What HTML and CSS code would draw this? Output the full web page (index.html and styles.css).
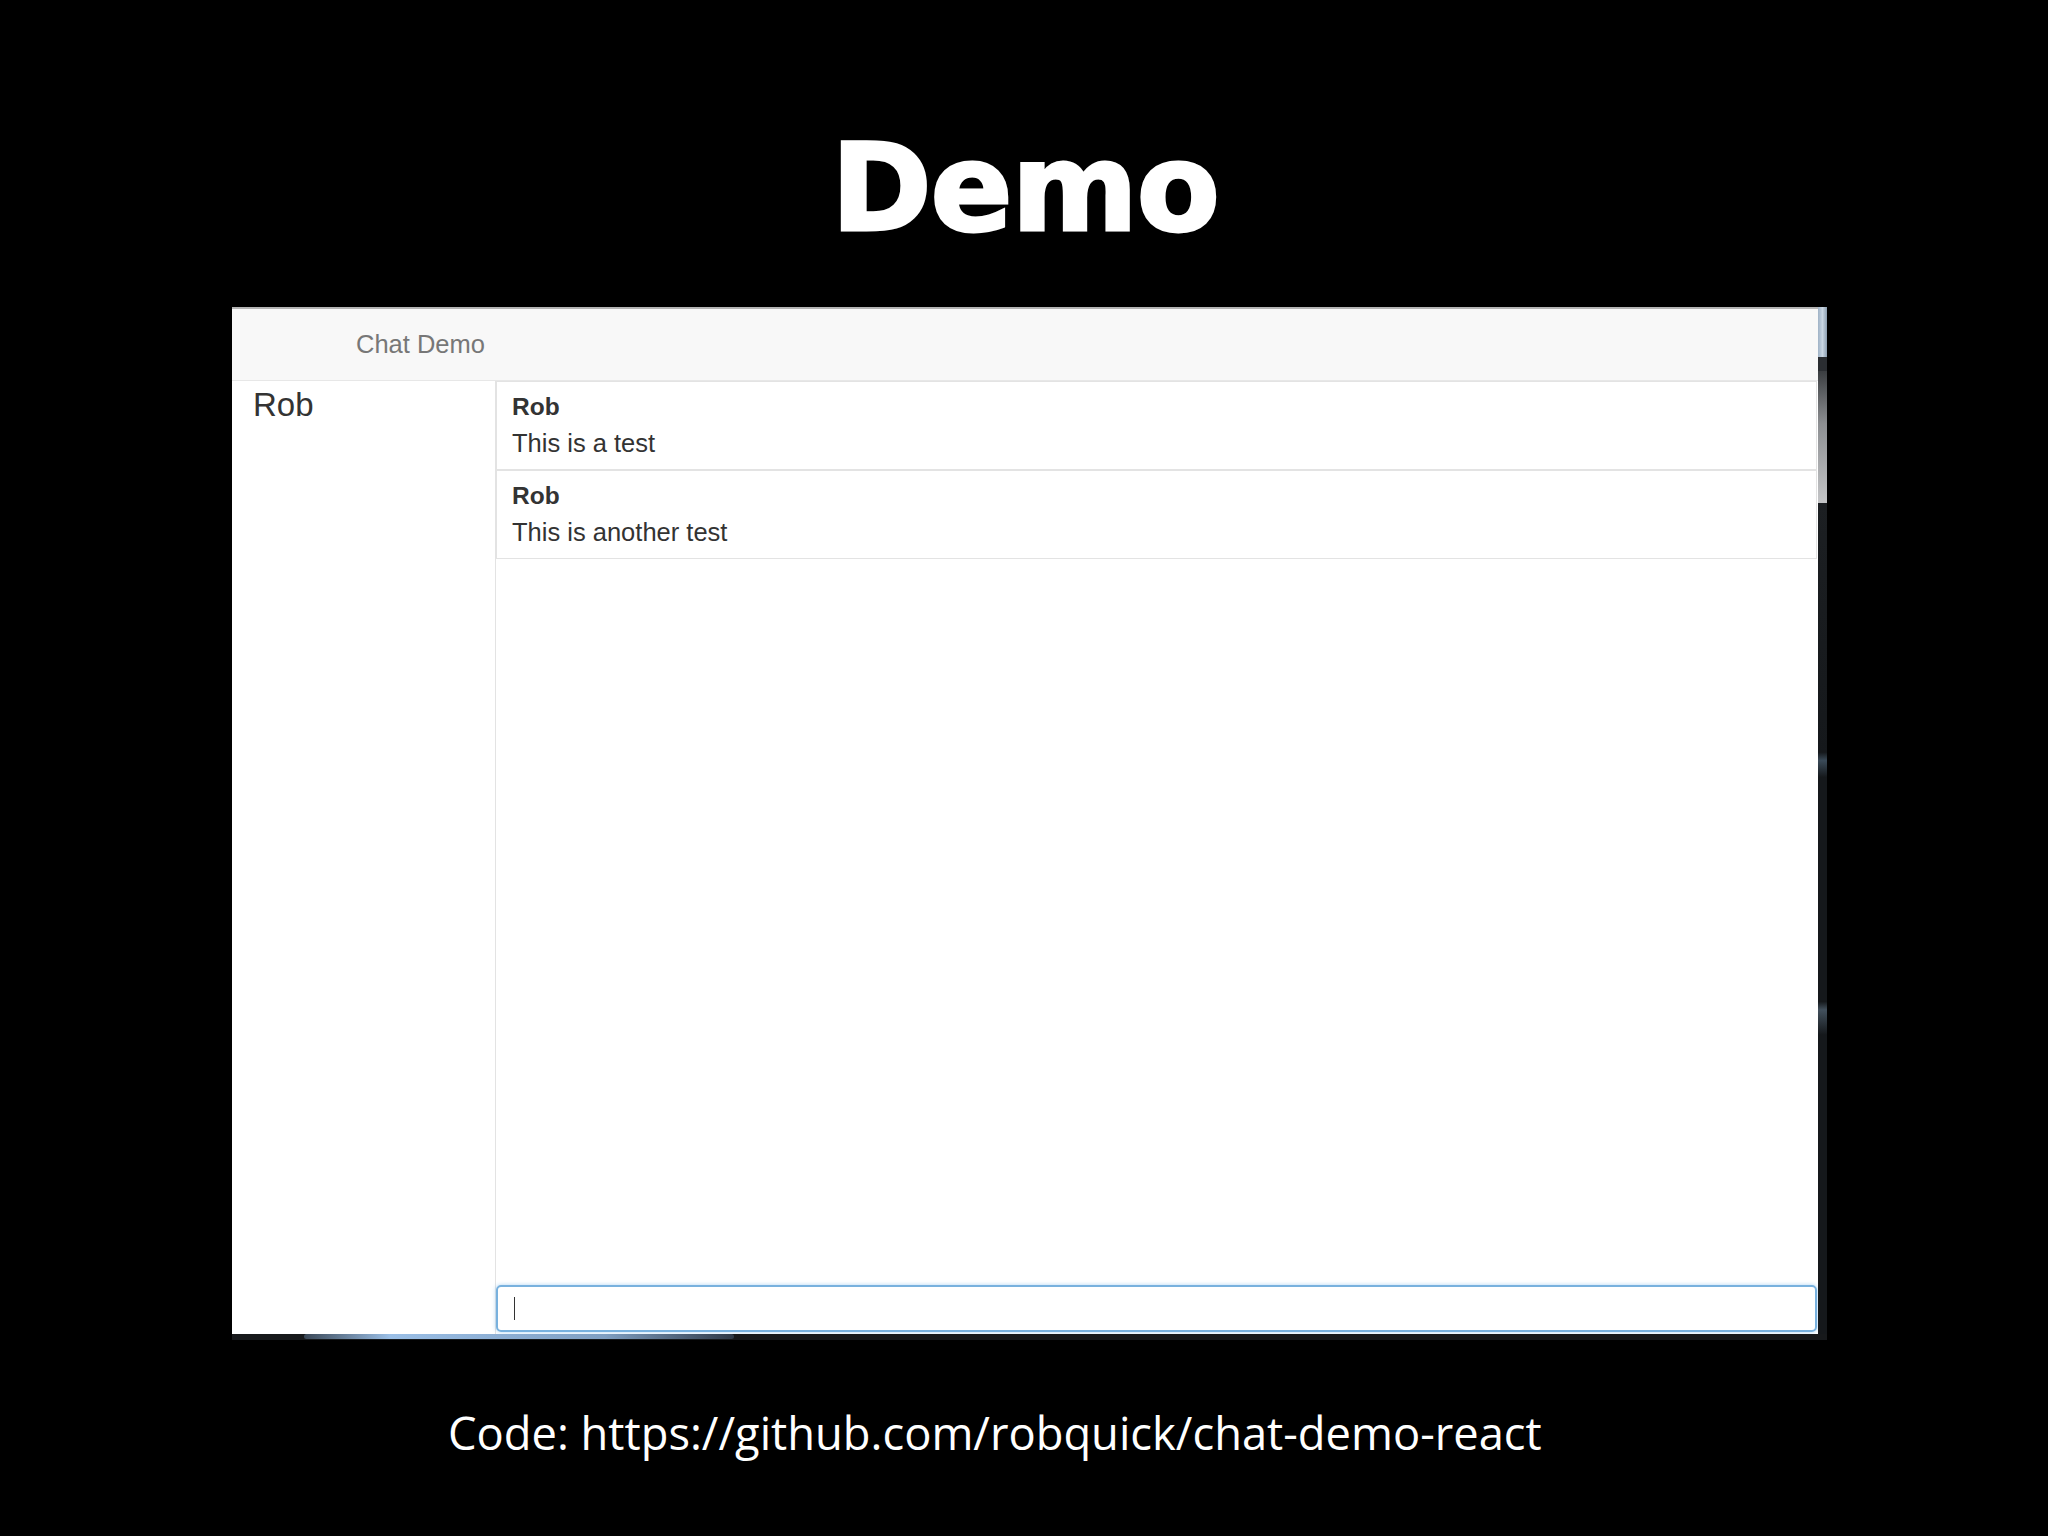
FILE: index.html
```html
<!doctype html>
<html lang="en">
  <head>
    <meta charset="UTF-8" />
    <meta name="viewport" content="width=device-width, initial-scale=1.0" />
    <title>Demo</title>
    <link rel="stylesheet" href="styles.css">
  </head>
  <body>
    <div class="slide">
      <h1 class="slide-title">Demo</h1>

      <div class="window">
        <div class="window-row">
          <div class="app">
            <div class="navbar">Chat Demo</div>
            <div class="app-body">
              <div class="users">
                <div class="user">Rob</div>
              </div>
              <div class="chat">
                <div class="messages">
                  <div class="message">
                    <div class="message-author">Rob</div>
                    <div class="message-text">This is a test</div>
                  </div>
                  <div class="message">
                    <div class="message-author">Rob</div>
                    <div class="message-text">This is another test</div>
                  </div>
                </div>
                <div class="chat-input"><span class="caret"></span></div>
              </div>
            </div>
          </div>
          <div class="scrollbar">
            <div class="scroll-cap"></div>
            <div class="scroll-gap"></div>
            <div class="scroll-thumb"></div>
            <div class="scroll-track"></div>
          </div>
        </div>
        <div class="window-edge"><span class="taskbar-glow"></span></div>
      </div>

      <p class="slide-footer">Code: https://github.com/robquick/chat-demo-react</p>
    </div>
  </body>
</html>
```

FILE: styles.css
```css
:root {
  --slide-bg: #000000;
  --text: #333333;
  --muted: #777777;
  --line: #e3e3e3;
  --focus: #78b1de;
}
body {
  margin: 0;
  padding: 0;
  width: 2048px;
  height: 1536px;
  overflow: hidden;
  background-color: var(--slide-bg);
  font-family: "Liberation Sans", Arial, sans-serif;
}

.slide {
  display: flex;
  flex-direction: column;
}
.slide-title {
  margin: 0;
  padding-top: 130px;
  text-align: center;
  color: white;
  font-family: "DejaVu Sans", sans-serif;
  font-size: 121px;
  line-height: 117px;
  font-weight: bold;
  letter-spacing: -1px;
  padding-left: 2px;
  -webkit-text-stroke: 3px white;
}

/* the screenshot of the chat app */
.window {
  margin-top: 60px;
  margin-left: 232px;
  width: 1595px;
  display: flex;
  flex-direction: column;
}
.window-row {
  display: flex;
  height: 1027px;
}
.app {
  width: 1586px;
  display: flex;
  flex-direction: column;
  background-color: white;
  border-top: 2px solid #b4b4b4;
}
.navbar {
  height: 71px;
  line-height: 71px;
  padding-left: 124px;
  background-color: #f8f8f8;
  border-bottom: 1px solid #e7e7e7;
  color: var(--muted);
  font-size: 25.5px;
}
.app-body {
  flex: 1;
  display: flex;
}
.users {
  width: 264px;
  box-sizing: border-box;
  border-right: 1px solid var(--line);
  padding: 6px 0 0 21px;
}
.user {
  font-size: 33px;
  line-height: 36px;
  color: var(--text);
}
.chat {
  flex: 1;
  display: flex;
  flex-direction: column;
  padding: 0 1px 2px 0;
}
.messages {
  flex: 1;
}
.message {
  border: 1px solid var(--line);
  padding: 7px 15px 8px;
  font-size: 25.5px;
  line-height: 36px;
  color: var(--text);
}
.message-author {
  font-weight: bold;
  font-size: 24.5px;
}
.chat-input {
  height: 43px;
  border: 2px solid var(--focus);
  border-radius: 5px;
  box-shadow: 0 0 4px rgba(102, 175, 233, 0.55);
  display: flex;
  align-items: center;
  padding-left: 16px;
}
.caret {
  width: 1px;
  height: 23px;
  background-color: #333;
}

.scrollbar {
  width: 9px;
  display: flex;
  flex-direction: column;
  background-color: #151719;
}
.scroll-cap {
  height: 50px;
  background: linear-gradient(to right, #9fb2c6, #c9d6e2, #8c9eb0);
}
.scroll-gap {
  height: 14px;
  background-color: #2a2d31;
}
.scroll-thumb {
  height: 132px;
  background: linear-gradient(to bottom, #3a3d40, #8d8f92 40%, #c4c5c7);
}
.scroll-track {
  flex: 1;
  background: linear-gradient(to bottom, #1c1f22, #15181b 30%, #3a4a58 31%, #15181b 33%, #15181b 60%, #42505c 61%, #15181b 64%);
}
.window-edge {
  height: 6px;
  background-color: #17191b;
  position: relative;
}
.taskbar-glow {
  position: absolute;
  left: 72px;
  top: 0;
  width: 430px;
  height: 5px;
  border-radius: 3px;
  background: linear-gradient(to right, rgba(140, 180, 225, 0.3), #9bbfe6 20%, #7f9fc2 70%, rgba(100, 130, 170, 0.3));
}

.slide-footer {
  margin: 71px 0 0 448px;
  color: white;
  font-family: "Open Sans", sans-serif;
  font-size: 45.3px;
  line-height: 44px;
}
```
